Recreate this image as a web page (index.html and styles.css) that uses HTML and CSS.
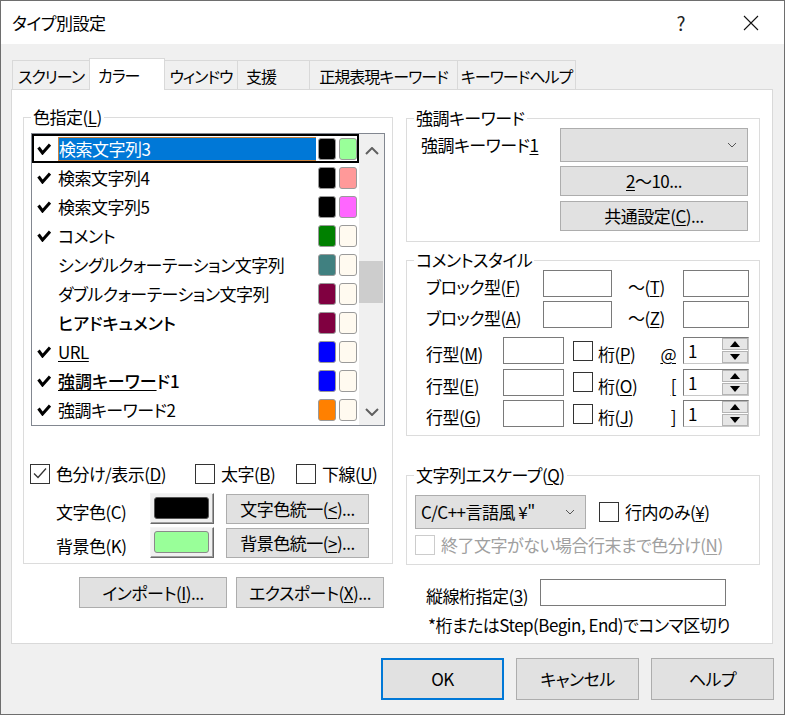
FILE: index.html
```html
<!DOCTYPE html>
<html lang="ja">
<head>
    <meta charset="UTF-8">
    <title>タイプ別設定</title>
    <link rel="stylesheet" href="styles.css">
</head>
<body>
<div class="window">
    <div class="titlebar">
        <span class="title">タイプ別設定</span>
        <span class="caption-help">?</span>
        <svg class="caption-close" width="16" height="16" viewBox="0 0 16 16"><path d="M1 1L15 15M15 1L1 15" stroke="#111" stroke-width="1.1" fill="none"/></svg>
    </div>

    <div class="tabs">
        <div class="tab">スクリーン</div>
        <div class="tab tab-short active">カラー</div>
        <div class="tab">ウィンドウ</div>
        <div class="tab tab-short">支援</div>
        <div class="tab">正規表現キーワード</div>
        <div class="tab last">キーワードヘルプ</div>
    </div>

    <div class="panel">
        <!-- left column -->
        <div class="col-left">
            <fieldset class="group group-color">
                <legend>色指定(<u>L</u>)</legend>
                <div class="listbox">
                    <div class="list-rows">
                        <div class="row selected">
                            <svg class="tick" width="14" height="12" viewBox="0 0 14 12"><path d="M1.5 4.5L5.5 10L13 1.5" fill="none" stroke="#000" stroke-width="3"/></svg>
                            <span class="name"><span class="hl">検索文字列3</span></span>
                            <span class="sw" style="background:#000"></span>
                            <span class="sw" style="background:#99ff99"></span>
                        </div>
                        <div class="row">
                            <svg class="tick" width="14" height="12" viewBox="0 0 14 12"><path d="M1.5 4.5L5.5 10L13 1.5" fill="none" stroke="#000" stroke-width="3"/></svg>
                            <span class="name">検索文字列4</span>
                            <span class="sw" style="background:#000"></span>
                            <span class="sw" style="background:#ff9999"></span>
                        </div>
                        <div class="row">
                            <svg class="tick" width="14" height="12" viewBox="0 0 14 12"><path d="M1.5 4.5L5.5 10L13 1.5" fill="none" stroke="#000" stroke-width="3"/></svg>
                            <span class="name">検索文字列5</span>
                            <span class="sw" style="background:#000"></span>
                            <span class="sw" style="background:#ff66ff"></span>
                        </div>
                        <div class="row">
                            <svg class="tick" width="14" height="12" viewBox="0 0 14 12"><path d="M1.5 4.5L5.5 10L13 1.5" fill="none" stroke="#000" stroke-width="3"/></svg>
                            <span class="name">コメント</span>
                            <span class="sw" style="background:#008000"></span>
                            <span class="sw" style="background:#fffaf0"></span>
                        </div>
                        <div class="row">
                            <span class="tick"></span>
                            <span class="name">シングルクォーテーション文字列</span>
                            <span class="sw" style="background:#408080"></span>
                            <span class="sw" style="background:#fffaf0"></span>
                        </div>
                        <div class="row">
                            <span class="tick"></span>
                            <span class="name">ダブルクォーテーション文字列</span>
                            <span class="sw" style="background:#800040"></span>
                            <span class="sw" style="background:#fffaf0"></span>
                        </div>
                        <div class="row">
                            <span class="tick"></span>
                            <span class="name bold">ヒアドキュメント</span>
                            <span class="sw" style="background:#800040"></span>
                            <span class="sw" style="background:#fffaf0"></span>
                        </div>
                        <div class="row">
                            <svg class="tick" width="14" height="12" viewBox="0 0 14 12"><path d="M1.5 4.5L5.5 10L13 1.5" fill="none" stroke="#000" stroke-width="3"/></svg>
                            <span class="name"><u>URL</u></span>
                            <span class="sw" style="background:#0000ff"></span>
                            <span class="sw" style="background:#fffaf0"></span>
                        </div>
                        <div class="row">
                            <svg class="tick" width="14" height="12" viewBox="0 0 14 12"><path d="M1.5 4.5L5.5 10L13 1.5" fill="none" stroke="#000" stroke-width="3"/></svg>
                            <span class="name bold"><u>強調キーワー</u>ド1</span>
                            <span class="sw" style="background:#0000ff"></span>
                            <span class="sw" style="background:#fffaf0"></span>
                        </div>
                        <div class="row">
                            <svg class="tick" width="14" height="12" viewBox="0 0 14 12"><path d="M1.5 4.5L5.5 10L13 1.5" fill="none" stroke="#000" stroke-width="3"/></svg>
                            <span class="name">強調キーワード2</span>
                            <span class="sw" style="background:#ff8000"></span>
                            <span class="sw" style="background:#fffaf0"></span>
                        </div>
                    </div>
                    <div class="vscroll">
                        <div class="sb-btn sb-up"><svg width="14" height="8" viewBox="0 0 14 8"><path d="M1 7L7 1L13 7" fill="none" stroke="#606060" stroke-width="2"/></svg></div>
                        <div class="sb-track"><div class="sb-thumb"></div></div>
                        <div class="sb-btn sb-down"><svg width="14" height="8" viewBox="0 0 14 8"><path d="M1 1L7 7L13 1" fill="none" stroke="#606060" stroke-width="2"/></svg></div>
                    </div>
                </div>

                <div class="check-row">
                    <label class="chk chk-wide"><span class="box"><svg width="20" height="20" viewBox="0 0 20 20"><path d="M4 9.5L8 13.5L16 4.5" fill="none" stroke="#333" stroke-width="1.3"/></svg></span>色分け/表示(<u>D</u>)</label>
                    <label class="chk chk-mid"><span class="box"></span>太字(<u>B</u>)</label>
                    <label class="chk"><span class="box"></span>下線(<u>U</u>)</label>
                </div>

                <div class="color-row">
                    <span class="clr-label">文字色(C)</span>
                    <span class="color-btn"><span class="fill fill-fg"></span></span>
                    <button class="btn btn-uni">文字色統一(<u>&lt;</u>)...</button>
                </div>
                <div class="color-row">
                    <span class="clr-label">背景色(K)</span>
                    <span class="color-btn"><span class="fill fill-bg"></span></span>
                    <button class="btn btn-uni">背景色統一(<u>&gt;</u>)...</button>
                </div>
            </fieldset>

            <div class="io-row">
                <button class="btn btn-io">インポート(<u>I</u>)...</button>
                <button class="btn btn-io">エクスポート(<u>X</u>)...</button>
            </div>
        </div>

        <!-- right column -->
        <div class="col-right">
            <fieldset class="group group-kw">
                <legend>強調キーワード</legend>
                <div class="kw-grid">
                    <span class="lbl kw-label">強調キーワード<u>1</u></span>
                    <div class="combo combo-kw"><span class="combo-text"></span><svg width="10" height="6" viewBox="0 0 10 6"><path d="M1 1L5 5L9 1" fill="none" stroke="#555" stroke-width="1"/></svg></div>
                    <button class="btn btn-kw"><u>2</u>〜10...</button>
                    <button class="btn btn-kw">共通設定(<u>C</u>)...</button>
                </div>
            </fieldset>

            <fieldset class="group group-comment">
                <legend>コメントスタイル</legend>
                <div class="block-grid">
                    <span class="lbl first">ブロック型(<u>F</u>)</span>
                    <span class="edit"></span>
                    <span class="lbl tilde">〜(<u>T</u>)</span>
                    <span class="edit"></span>
                    <span class="lbl first">ブロック型(<u>A</u>)</span>
                    <span class="edit"></span>
                    <span class="lbl tilde">〜(<u>Z</u>)</span>
                    <span class="edit"></span>
                </div>
                <div class="line-grid">
                    <span class="lbl first">行型(<u>M</u>)</span>
                    <span class="edit"></span>
                    <span class="box"></span>
                    <span class="lbl digit">桁(<u>P</u>)</span>
                    <span class="lbl sym"><u>@</u></span>
                    <div class="spin"><span class="spin-val">1</span><span class="spin-btns"><span class="spin-b"><svg width="10" height="6" viewBox="0 0 10 6"><path d="M0 6L5 0L10 6Z" fill="#000"/></svg></span><span class="spin-b"><svg width="10" height="6" viewBox="0 0 10 6"><path d="M0 0L5 6L10 0Z" fill="#000"/></svg></span></span></div>

                    <span class="lbl first">行型(<u>E</u>)</span>
                    <span class="edit"></span>
                    <span class="box"></span>
                    <span class="lbl digit">桁(<u>O</u>)</span>
                    <span class="lbl sym"><u>[</u></span>
                    <div class="spin"><span class="spin-val">1</span><span class="spin-btns"><span class="spin-b"><svg width="10" height="6" viewBox="0 0 10 6"><path d="M0 6L5 0L10 6Z" fill="#000"/></svg></span><span class="spin-b"><svg width="10" height="6" viewBox="0 0 10 6"><path d="M0 0L5 6L10 0Z" fill="#000"/></svg></span></span></div>

                    <span class="lbl first">行型(<u>G</u>)</span>
                    <span class="edit"></span>
                    <span class="box"></span>
                    <span class="lbl digit">桁(<u>J</u>)</span>
                    <span class="lbl sym"><u>]</u></span>
                    <div class="spin"><span class="spin-val">1</span><span class="spin-btns"><span class="spin-b"><svg width="10" height="6" viewBox="0 0 10 6"><path d="M0 6L5 0L10 6Z" fill="#000"/></svg></span><span class="spin-b"><svg width="10" height="6" viewBox="0 0 10 6"><path d="M0 0L5 6L10 0Z" fill="#000"/></svg></span></span></div>
                </div>
            </fieldset>

            <fieldset class="group group-escape">
                <legend>文字列エスケープ(<u>Q</u>)</legend>
                <div class="esc-row">
                    <div class="combo combo-esc"><span class="combo-text">C/C++言語風 ¥"</span><svg width="10" height="6" viewBox="0 0 10 6"><path d="M1 1L5 5L9 1" fill="none" stroke="#555" stroke-width="1"/></svg></div>
                    <label class="chk"><span class="box"></span>行内のみ(<u>¥</u>)</label>
                </div>
                <label class="chk disabled"><span class="box"></span>終了文字がない場合行末まで色分け(<u>N</u>)</label>
            </fieldset>

            <div class="vline-row">
                <span class="lbl">縦線桁指定(<u>3</u>)</span>
                <span class="edit edit-vline"></span>
            </div>
            <div class="note">*桁またはStep(Begin, End)でコンマ区切り</div>
        </div>
    </div>

    <div class="dlg-buttons">
        <button class="btn btn-dlg default">OK</button>
        <button class="btn btn-dlg">キャンセル</button>
        <button class="btn btn-dlg">ヘルプ</button>
    </div>
</div>
</body>
</html>
```

FILE: styles.css
```css
* {
    box-sizing: border-box;
}

body {
    margin: 0;
    background: #f0f0f0;
    color: #000;
    font-family: "Noto Sans CJK JP", "Noto Sans", sans-serif;
    font-size: 17px;
    line-height: 20px;
    letter-spacing: -0.5px;
    font-feature-settings: "palt";
}

u {
    text-underline-offset: 2px;
}

.window {
    width: 785px;
    height: 715px;
    border: 1px solid #6e6e6e;
    background: #f0f0f0;
}

/* title bar */
.titlebar {
    height: 43px;
    background: #fff;
    display: flex;
    align-items: center;
    padding-left: 11px;
}
.title {
    flex: 1;
}
.caption-help {
    font-size: 19px;
    color: #222;
    margin-right: 58px;
}
.caption-close {
    margin-right: 25px;
}

/* tabs */
.tabs {
    display: grid;
    grid-template-columns: 77px 75px 73px 72px 148px 119px;
    align-items: end;
    height: 32px;
    margin: 14px 0 -1px 11px;
    font-size: 16px;
    letter-spacing: -1px;
}
.tab {
    height: 30px;
    border: 1px solid #d9d9d9;
    border-right: none;
    border-bottom: none;
    display: flex;
    align-items: center;
    justify-content: center;
    white-space: nowrap;
    overflow: hidden;
}
.tab-short {
    justify-content: flex-start;
    padding-left: 8px;
}
.tab.last {
    border-right: 1px solid #d9d9d9;
}
.tab.active {
    height: 32px;
    background: #fff;
    position: relative;
    border-right: 1px solid #d9d9d9;
    margin-right: -1px;
}

.panel {
    margin-left: 10px;
    width: 762px;
    height: 555px;
    background: #fff;
    border: 1px solid #d9d9d9;
    padding: 17px 11px 0;
    display: flex;
    gap: 13px;
}

/* group boxes */
.group {
    margin: 0;
    padding: 0 7px;
    border: 1px solid #dcdcdc;
    min-width: 0;
}
.group legend {
    padding: 0 2px;
    line-height: 20px;
}

.col-left {
    width: 370px;
    flex: none;
}
.col-right {
    width: 354px;
    flex: none;
    padding-top: 1px;
}

.group-color {
    padding-bottom: 5px;
}

/* listbox */
.listbox {
    margin-top: 6px;
    height: 293px;
    border: 1px solid #828790;
    display: flex;
}
.list-rows {
    flex: 1;
}
.row {
    height: 29px;
    display: flex;
    align-items: center;
    padding: 0 2px 0 5px;
}
.row.selected {
    box-shadow: inset 0 0 0 2px #000;
}
.tick {
    width: 14px;
    height: 12px;
    flex: none;
    margin-right: 7px;
}
.name {
    flex: 1;
    white-space: nowrap;
    height: 24px;
    display: flex;
    align-items: center;
    margin-right: 2px;
}
.name.bold {
    font-weight: 500;
    letter-spacing: 0;
}
.hl {
    flex: 1;
    height: 24px;
    display: flex;
    align-items: center;
    background: #0078d7;
    color: #fff;
    border: 1px solid #c9823e;
    border-right: none;
}
.sw {
    width: 18px;
    height: 22px;
    border: 1px solid #9a9a9a;
    border-radius: 3px;
    flex: none;
}
.sw + .sw {
    margin-left: 3px;
}

.vscroll {
    width: 25px;
    background: #f0f0f0;
    display: flex;
    flex-direction: column;
}
.sb-btn {
    display: flex;
    align-items: center;
    justify-content: center;
}
.sb-up {
    height: 32px;
    padding-top: 2px;
}
.sb-down {
    height: 26px;
}
.sb-track {
    flex: 1;
}
.sb-thumb {
    margin-top: 95px;
    height: 42px;
    width: 24px;
    background: #cdcdcd;
}

/* check boxes */
.chk {
    display: flex;
    align-items: center;
    white-space: nowrap;
}
.box {
    width: 20px;
    height: 20px;
    border: 1px solid #333;
    background: #fff;
    flex: none;
    display: block;
}
.box svg {
    display: block;
    margin: -1px;
}
.chk .box {
    margin-right: 6px;
}
.chk.disabled {
    color: #a0a0a0;
}
.chk.disabled .box {
    border-color: #cccccc;
}

.check-row {
    display: flex;
    margin: 38px 0 0 -1px;
    height: 20px;
}
.chk-wide {
    width: 165px;
    flex: none;
}
.chk-mid {
    width: 101px;
    flex: none;
}

/* colour buttons */
.color-row {
    display: flex;
    align-items: center;
    height: 31px;
    margin-top: 3px;
}
.check-row + .color-row {
    margin-top: 9px;
}
.clr-label {
    width: 119px;
    flex: none;
    padding: 6px 0 0 25px;
}
.color-btn {
    width: 64px;
    height: 31px;
    flex: none;
    border: 1px solid;
    border-color: #f4f4f4 #696969 #696969 #f4f4f4;
    box-shadow: inset -1px -1px 0 #a0a0a0;
    background: #f0f0f0;
    padding: 3px 4px 4px 3px;
    display: block;
}
.fill {
    display: block;
    height: 100%;
    border: 1px solid #555;
    border-radius: 3px;
}
.fill-fg {
    background: #000;
}
.fill-bg {
    background: #99ff99;
    border-color: #8a8a8a;
}

/* buttons */
.btn {
    font: inherit;
    letter-spacing: inherit;
    font-feature-settings: "palt";
    color: #000;
    background: #e1e1e1;
    border: 1px solid #adadad;
    padding: 0;
    margin: 0;
    white-space: nowrap;
}
.btn-uni {
    width: 143px;
    height: 30px;
    margin-left: 12px;
    flex: none;
}
.io-row {
    display: flex;
    gap: 9px;
    margin: 13px 0 0 56px;
}
.btn-io {
    width: 148px;
    height: 31px;
}

/* right column */
.group-kw {
    padding-bottom: 10px;
}
.kw-grid {
    display: grid;
    grid-template-columns: 146px 188px;
    row-gap: 4px;
}
.kw-label {
    padding-left: 7px;
}
.combo {
    background: #e1e1e1;
    border: 1px solid #adadad;
    display: flex;
    align-items: center;
    padding: 0 10px 0 5px;
}
.combo-text {
    flex: 1;
    white-space: nowrap;
}
.combo-kw {
    height: 34px;
}
.btn-kw {
    grid-column: 2;
    height: 30px;
}
.btn-kw + .btn-kw {
    margin-top: 1px;
}

.lbl {
    padding-top: 7px;
    white-space: nowrap;
}
.edit {
    display: block;
    height: 27px;
    background: #fff;
    border: 1px solid #7a7a7a;
}

.group-comment {
    margin-top: 8px;
    padding-bottom: 8px;
}
.block-grid {
    display: grid;
    grid-template-columns: 129px 69px 71px 66px;
    grid-auto-rows: 27px;
    row-gap: 4px;
    align-items: center;
}
.lbl.first {
    padding-left: 12px;
}
.tilde {
    padding-left: 16px;
}
.line-grid {
    display: grid;
    grid-template-columns: 89px 61px 29px 65px 25px 66px;
    grid-auto-rows: 27px;
    row-gap: 4.5px;
    align-items: center;
    margin-top: 9px;
}
.line-grid > .box {
    margin-left: 9px;
}
.digit {
    padding-left: 5px;
}
.sym {
    justify-self: end;
    padding-right: 7px;
}
.spin {
    height: 27px;
    border: 1px solid #7a7a7a;
    border-right-color: #c8c8c8;
    border-bottom-color: #c8c8c8;
    background: #fff;
    display: flex;
}
.spin-val {
    flex: 1;
    padding: 3px 0 0 4px;
}
.spin-btns {
    width: 26px;
    display: flex;
    flex-direction: column;
    gap: 1px;
}
.spin-b {
    flex: 1;
    background: #e6e6e6;
    border: 1px solid #b4b4b4;
    display: flex;
    align-items: center;
    justify-content: center;
}

.group-escape {
    margin-top: 29px;
    padding: 10px 7px 9px;
}
.esc-row {
    display: flex;
    align-items: center;
    gap: 13px;
    margin-left: 1px;
}
.combo-esc {
    width: 171px;
    height: 34px;
    flex: none;
}
.group-escape .disabled {
    margin: 6px 0 0 1px;
}

.vline-row {
    display: flex;
    margin-top: 14px;
    padding-left: 20px;
    align-items: flex-start;
}
.vline-row .lbl {
    width: 114px;
}
.edit-vline {
    width: 186px;
}
.note {
    margin-top: 9px;
    padding-left: 22px;
    white-space: nowrap;
}

/* dialog buttons */
.dlg-buttons {
    display: flex;
    justify-content: flex-end;
    gap: 12px;
    margin-top: 14px;
    padding-right: 10px;
}
.btn-dlg {
    width: 123px;
    height: 42px;
}
.btn-dlg.default {
    border: 2px solid #0078d7;
}
```
